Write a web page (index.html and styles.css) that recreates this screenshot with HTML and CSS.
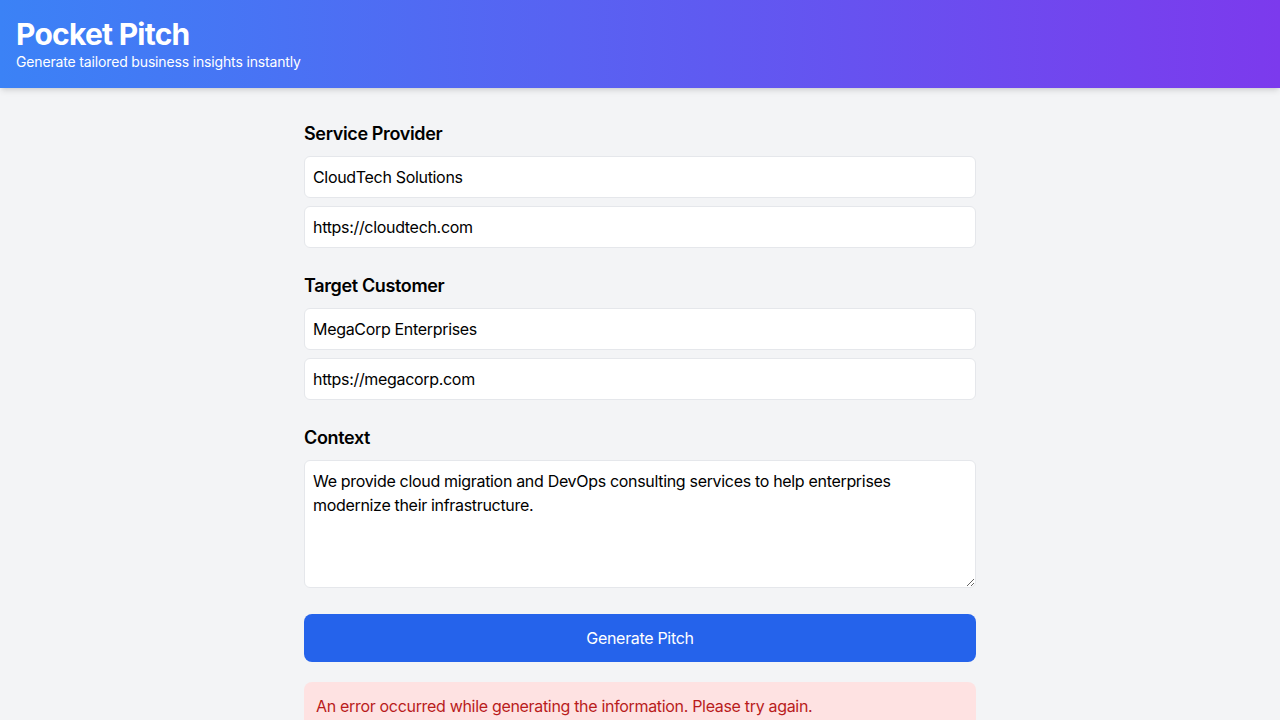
FILE: index.html
```html
<!DOCTYPE html>
<html lang="en">
<head>
<meta charset="utf-8">
<title>Pocket Pitch</title>
<link rel="stylesheet" href="styles.css">
</head>
<body>
<header class="header">
  <h1 class="title">Pocket Pitch</h1>
  <p class="subtitle">Generate tailored business insights instantly</p>
</header>
<main class="main">
  <form class="form">
    <section class="group">
      <h2 class="label">Service Provider</h2>
      <input class="field" type="text" value="CloudTech Solutions">
      <input class="field" type="text" value="https://cloudtech.com">
    </section>
    <section class="group">
      <h2 class="label">Target Customer</h2>
      <input class="field" type="text" value="MegaCorp Enterprises">
      <input class="field" type="text" value="https://megacorp.com">
    </section>
    <section class="group">
      <h2 class="label">Context</h2>
      <textarea class="area">We provide cloud migration and DevOps consulting services to help enterprises modernize their infrastructure.</textarea>
    </section>
    <button type="button" class="btn">Generate Pitch</button>
  </form>
  <div class="error">An error occurred while generating the information. Please try again.</div>
</main>
</body>
</html>
```
FILE: styles.css
```css
* { box-sizing: border-box; }
html, body { margin: 0; padding: 0; }
body {
  background: #f3f4f6;
  font-family: Inter, "Noto Sans", "Liberation Sans", sans-serif;
  color: #000;
  min-height: 720px;
  letter-spacing: -0.02em;
}
.header {
  background: linear-gradient(to right, #3b82f6, #7c3aed);
  color: #fff;
  padding: 16px;
  height: 88px;
  box-shadow: 0 4px 6px -1px rgba(0,0,0,0.1), 0 2px 4px -2px rgba(0,0,0,0.1);
  position: relative;
}
.title {
  margin: 0;
  font-size: 30px;
  line-height: 36px;
  font-weight: 700;
  letter-spacing: -0.025em;
}
.subtitle {
  margin: 0;
  font-size: 14px;
  line-height: 20px;
  letter-spacing: -0.011em;
}
.main {
  width: 672px;
  margin: 0 auto;
  padding-top: 32px;
}
.form {
  display: flex;
  flex-direction: column;
}
.group {
  display: flex;
  flex-direction: column;
  gap: 8px;
  margin-bottom: 24px;
}
.label {
  margin: 0;
  font-size: 18px;
  line-height: 28px;
  font-weight: 600;
  letter-spacing: -0.02em;
}
.field, .area {
  font: inherit;
  font-size: 16px;
  line-height: 24px;
  letter-spacing: -0.02em;
  color: #000;
  background: #fff;
  border: 1px solid #e5e7eb;
  border-radius: 6px;
  padding: 8px;
  width: 100%;
  outline: none;
}
.field { height: 42px; }
.area {
  height: 128px;
  resize: vertical;
  display: block;
}
.group:has(.area) { margin-bottom: 26px; }
.btn {
  font: inherit;
  font-size: 16px;
  line-height: 24px;
  letter-spacing: -0.02em;
  height: 48px;
  width: 100%;
  border: none;
  border-radius: 8px;
  background: #2563eb;
  color: #fff;
  cursor: pointer;
}
.error {
  margin-top: 20px;
  background: #fee2e2;
  color: #b91c1c;
  border-radius: 8px;
  padding: 12px 12px 16px;
  font-size: 16px;
  line-height: 24px;
  height: 60px;
}
```
